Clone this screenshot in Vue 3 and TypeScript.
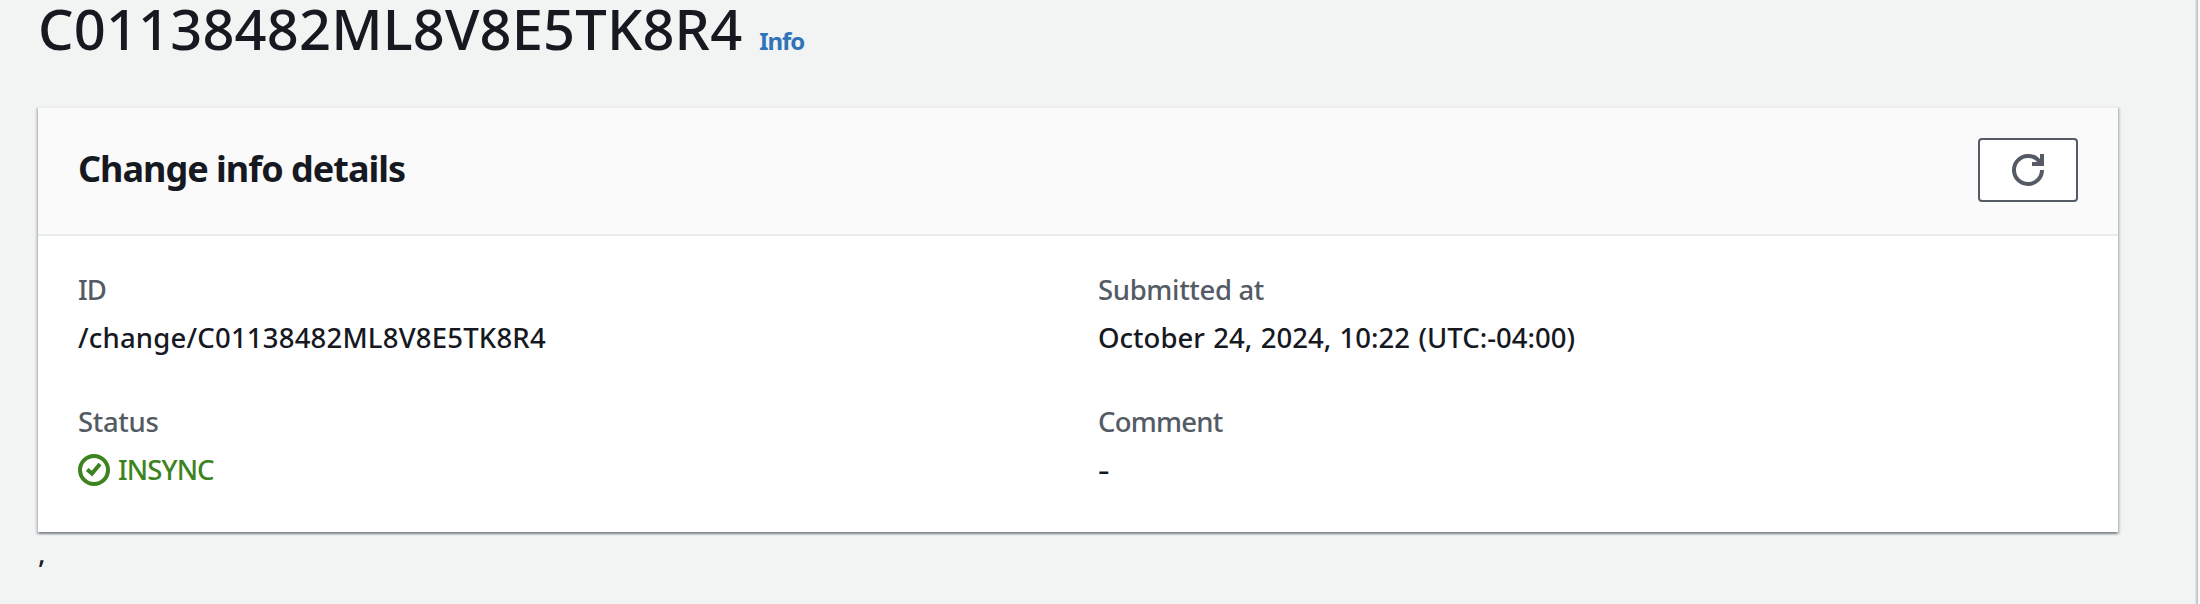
<script setup lang="ts">
interface Field {
  label: string
  value: string
  kind: 'id' | 'date' | 'status' | 'empty'
}

const changeId = 'C01138482ML8V8E5TK8R4'

const fields: Field[] = [
  { label: 'ID', value: `/change/${changeId}`, kind: 'id' },
  { label: 'Submitted at', value: 'October 24, 2024, 10:22 (UTC:-04:00)', kind: 'date' },
  { label: 'Status', value: 'INSYNC', kind: 'status' },
  { label: 'Comment', value: '-', kind: 'empty' },
]
</script>

<template>
  <div class="page">
    <main class="content">
      <header class="page-header">
        <h1 class="page-title">{{ changeId }}</h1>
        <a class="info-link">Info</a>
      </header>

      <section class="card">
        <div class="card-header">
          <h2 class="card-title">Change info details</h2>
          <button class="refresh" type="button" aria-label="Refresh">
            <svg class="icon" viewBox="0 0 16 16" fill="none" stroke="currentColor" stroke-width="2">
              <path d="M10 5h5V0" />
              <path d="M15 8a6.957 6.957 0 0 1-7 7 6.957 6.957 0 0 1-7-7 6.957 6.957 0 0 1 7-7 6.87 6.87 0 0 1 6.3 4" />
            </svg>
          </button>
        </div>
        <dl class="details">
          <div v-for="field in fields" :key="field.label" class="field">
            <dt class="label" :class="`label-${field.kind}`">{{ field.label }}</dt>
            <dd class="value" :class="field.kind">
              <svg
                v-if="field.kind === 'status'"
                class="icon"
                viewBox="0 0 16 16"
                fill="none"
                stroke="currentColor"
                stroke-width="2"
              >
                <circle cx="8" cy="8" r="7" />
                <path d="M4.6 7.7 7 9.8 11 5" />
              </svg>
              <span class="text">{{ field.value }}</span>
            </dd>
          </div>
        </dl>
      </section>

      <div class="trailing">,</div>
    </main>
    <aside class="edge"></aside>
  </div>
</template>

<style>
body {
  margin: 0;
  background: #f2f3f3;
}
</style>

<style scoped>
.page {
  display: flex;
  height: 604px;
  overflow: hidden;
  background: #f2f3f3;
  color: #16191f;
  font-family: 'Noto Sans', 'Open Sans', sans-serif;
  font-size: 27.5px;
  font-weight: 500;
  line-height: 44px;
}

.content {
  display: flex;
  flex: 1;
  flex-direction: column;
  padding: 0 77px 0 38px;
}

.page-header {
  display: flex;
  align-items: baseline;
  height: 64px;
  margin-bottom: 42px;
}

.page-title {
  margin: 0;
  font-size: 56px;
  font-weight: 500;
  line-height: 56px;
  letter-spacing: 0.15px;
}

.info-link {
  margin-left: 17px;
  color: #2f73b8;
  font-size: 24px;
  font-weight: 700;
  letter-spacing: -1.1px;
}

.card {
  background: #fff;
  box-shadow:
    0 2px 2px rgba(0, 28, 36, 0.3),
    2px 2px 2px rgba(0, 28, 36, 0.15),
    -2px 2px 2px rgba(0, 28, 36, 0.15);
}

.card-header {
  display: flex;
  align-items: center;
  justify-content: space-between;
  box-sizing: border-box;
  height: 130px;
  padding: 0 40px;
  border-top: 2px solid #ebeded;
  border-bottom: 2px solid #e9ebeb;
  background: #fafafa;
}

.card-title {
  margin: 0;
  padding-bottom: 4px;
  font-size: 36px;
  font-weight: 700;
  letter-spacing: -1px;
}

.refresh {
  display: flex;
  align-items: center;
  justify-content: center;
  box-sizing: border-box;
  width: 100px;
  height: 64px;
  margin: 0 0 2px;
  padding: 0;
  border: 2px solid #545b64;
  border-radius: 4px;
  background: #fff;
  color: #545b64;
}

.icon {
  display: block;
  flex: none;
  width: 32px;
  height: 32px;
}

.details {
  display: grid;
  grid-template-columns: 1fr 1fr;
  gap: 40px;
  margin: 0;
  padding: 32px 40px 40px;
}

.label {
  margin-bottom: 4px;
  color: #545b64;
  letter-spacing: -0.35px;
}

.label-id {
  letter-spacing: -1px;
}

.label-empty {
  letter-spacing: -0.77px;
}

.value {
  display: flex;
  align-items: center;
  height: 44px;
  margin: 0;
}

.id {
  letter-spacing: 0.2px;
}

.date {
  letter-spacing: 0;
  word-spacing: 1.3px;
}

.status {
  gap: 8px;
  color: #3d8321;
  letter-spacing: -0.9px;
}

.empty .text {
  transform: scaleX(1.3);
  transform-origin: left;
}

.trailing {
  line-height: 42px;
}

.edge {
  width: 3px;
  border-right: 2px solid #f8f9f9;
  background: linear-gradient(to right, #e6e9e9, #b6bdbe);
}
</style>
